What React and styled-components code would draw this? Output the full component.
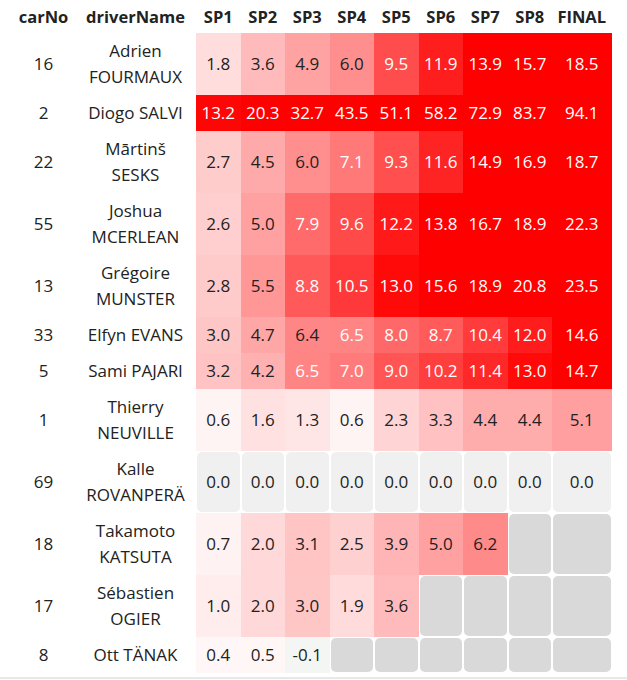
import React from "react";
import styled, { createGlobalStyle } from "styled-components";

const Global = createGlobalStyle`
  html, body { margin: 0; padding: 0; background: #fff; }
  body { font-family: "Open Sans", "Noto Sans", "Liberation Sans", sans-serif; color: #222; }
`;

const COLS = "63px 121px repeat(8, 44.5px) 59.5px";

const Page = styled.div`
  padding: 0 0 4px 12px;
  border-bottom: 2px solid #e8e8e8;
`;

const Table = styled.div`
  display: flex;
  flex-direction: column;
  width: 600px;
`;

const Row = styled.div`
  display: grid;
  grid-template-columns: ${COLS};
`;

const HeadCell = styled.div`
  display: flex;
  align-items: center;
  justify-content: center;
  height: 33px;
  font-size: 16.5px;
  font-weight: 700;
  white-space: nowrap;
`;

const TextCell = styled.div`
  display: flex;
  align-items: center;
  justify-content: center;
  text-align: center;
  padding: 5px 8px;
  font-size: 17px;
  line-height: 26px;
`;

const ValueCell = styled.div`
  display: flex;
  align-items: center;
  justify-content: center;
  font-size: 17px;
  line-height: 26px;
  white-space: nowrap;
  color: ${(p) => (p.$light ? "#fff" : "#222")};
  background: ${(p) => p.$bg};
  margin: ${(p) => (p.$rounded ? "1px" : "0")};
  border-radius: ${(p) => (p.$rounded ? "5px" : "0")};
`;

const data = [
  ["16", "Adrien FOURMAUX", [1.8, 3.6, 4.9, 6.0, 9.5, 11.9, 13.9, 15.7, 18.5]],
  ["2", "Diogo SALVI", [13.2, 20.3, 32.7, 43.5, 51.1, 58.2, 72.9, 83.7, 94.1]],
  ["22", "Mārtinš SESKS", [2.7, 4.5, 6.0, 7.1, 9.3, 11.6, 14.9, 16.9, 18.7]],
  ["55", "Joshua MCERLEAN", [2.6, 5.0, 7.9, 9.6, 12.2, 13.8, 16.7, 18.9, 22.3]],
  ["13", "Grégoire MUNSTER", [2.8, 5.5, 8.8, 10.5, 13.0, 15.6, 18.9, 20.8, 23.5]],
  ["33", "Elfyn EVANS", [3.0, 4.7, 6.4, 6.5, 8.0, 8.7, 10.4, 12.0, 14.6]],
  ["5", "Sami PAJARI", [3.2, 4.2, 6.5, 7.0, 9.0, 10.2, 11.4, 13.0, 14.7]],
  ["1", "Thierry NEUVILLE", [0.6, 1.6, 1.3, 0.6, 2.3, 3.3, 4.4, 4.4, 5.1]],
  ["69", "Kalle ROVANPERÄ", [0, 0, 0, 0, 0, 0, 0, 0, 0]],
  ["18", "Takamoto KATSUTA", [0.7, 2.0, 3.1, 2.5, 3.9, 5.0, 6.2, null, null]],
  ["17", "Sébastien OGIER", [1.0, 2.0, 3.0, 1.9, 3.6, null, null, null, null]],
  ["8", "Ott TÄNAK", [0.4, 0.5, -0.1, null, null, null, null, null, null]],
];

const headers = ["carNo", "driverName", "SP1", "SP2", "SP3", "SP4", "SP5", "SP6", "SP7", "SP8", "FINAL"];

function cellStyle(v) {
  if (v === null) return { bg: "#d9d9d9", rounded: true, light: false, text: "" };
  if (v === 0) return { bg: "#f0f0f0", rounded: true, light: false, text: "0.0" };
  if (v < 0) return { bg: "rgb(243,246,242)", rounded: false, light: false, text: v.toFixed(1) };
  const t = Math.min(v / 13.5, 1);
  const c = Math.round(255 * (1 - t));
  return { bg: `rgb(255,${c},${c})`, rounded: false, light: v >= 6.45, text: v.toFixed(1) };
}

export default function App() {
  return (
    <Page>
      <Global />
      <Table>
        <Row>
          {headers.map((h) => (
            <HeadCell key={h}>{h}</HeadCell>
          ))}
        </Row>
        {data.map(([no, name, vals]) => (
          <Row key={no}>
            <TextCell>{no}</TextCell>
            <TextCell>{name}</TextCell>
            {vals.map((v, i) => {
              const s = cellStyle(v);
              return (
                <ValueCell key={i} $bg={s.bg} $rounded={s.rounded} $light={s.light}>
                  {s.text}
                </ValueCell>
              );
            })}
          </Row>
        ))}
      </Table>
    </Page>
  );
}
